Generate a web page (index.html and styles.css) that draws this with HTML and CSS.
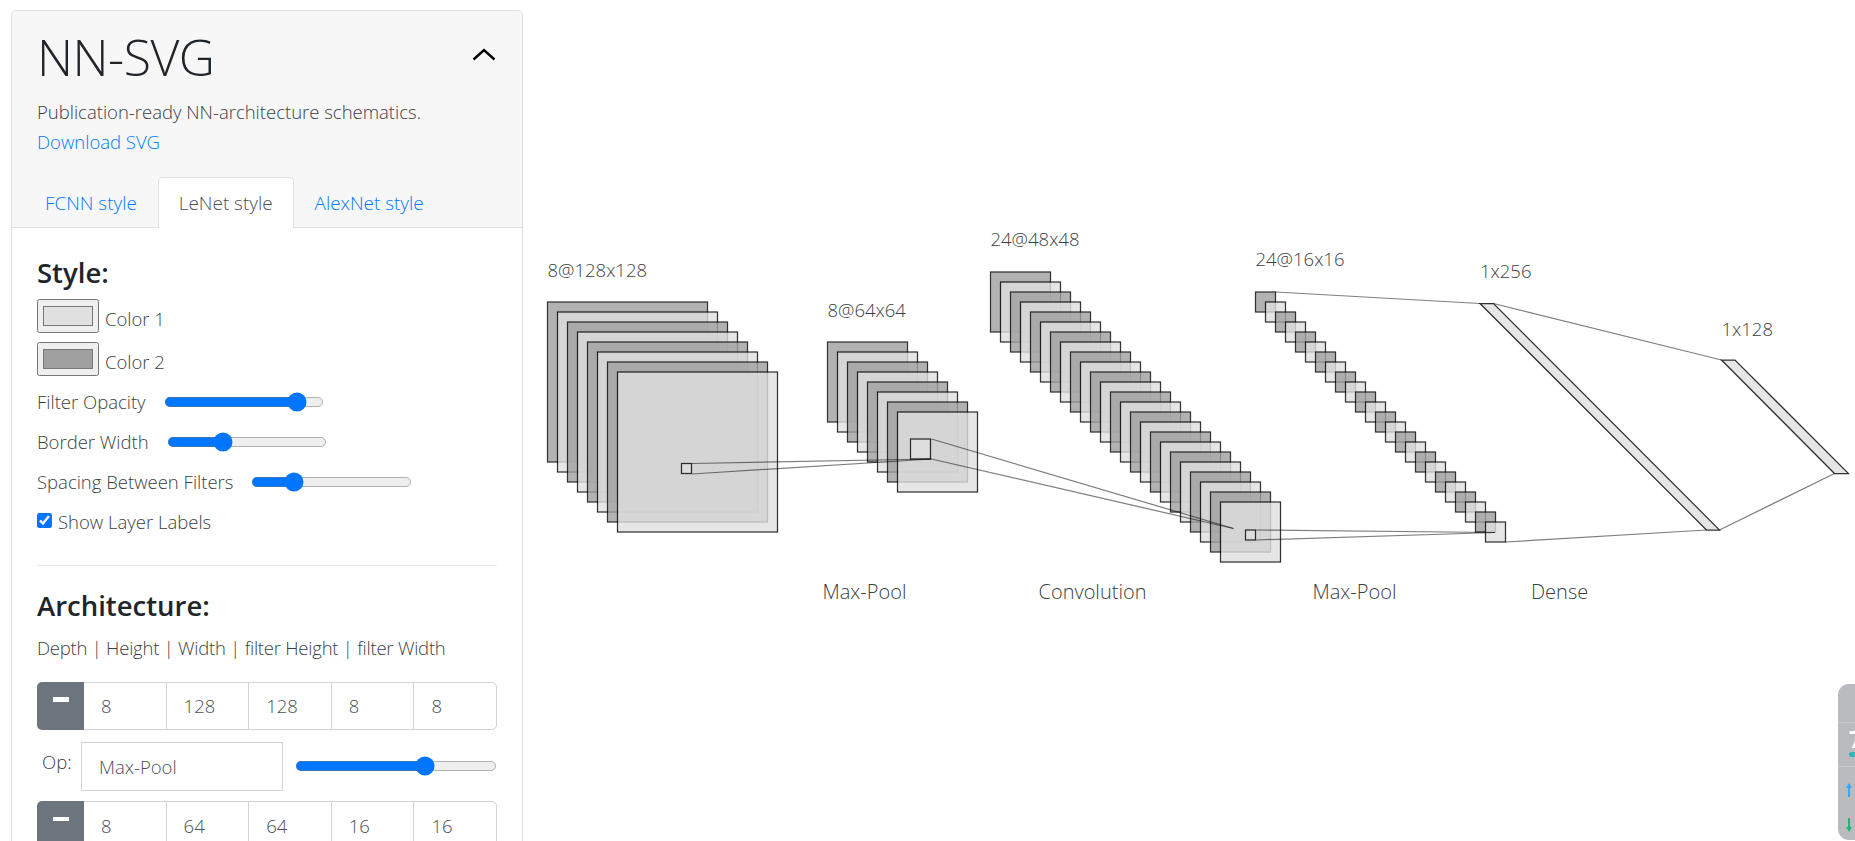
FILE: index.html
```html
<!DOCTYPE html>
<html lang="en">
<head>
    <meta charset="utf-8"/>
    <title>NN-SVG</title>
    <link rel="stylesheet" href="styles.css">
</head>
<body>
<div class="page">
    <div class="card">
        <div class="card-header">
            <div class="title-row">
                <h1>NN-SVG</h1>
                <svg class="chevron" width="24" height="14" viewBox="0 0 24 14">
                    <path d="M1.5 12.5 L12 3 L22.5 12.5" fill="none" stroke="#000" stroke-width="2.4"/>
                </svg>
            </div>
            <p class="lead">Publication-ready NN-architecture schematics.</p>
            <p class="lead"><a href="#">Download SVG</a></p>
            <ul class="tabs">
                <li><a href="#">FCNN style</a></li>
                <li class="active"><a href="#">LeNet style</a></li>
                <li><a href="#">AlexNet style</a></li>
            </ul>
        </div>
        <div class="card-body">
            <h5>Style:</h5>
            <div class="color-row">
                <input type="color" value="#e0e0e0">
                <label>Color 1</label>
            </div>
            <div class="color-row">
                <input type="color" value="#a0a0a0">
                <label>Color 2</label>
            </div>
            <div class="slider-row first">
                <label>Filter Opacity</label>
                <input type="range" class="slider-a" min="0" max="100" value="88">
            </div>
            <div class="slider-row">
                <label>Border Width</label>
                <input type="range" class="slider-b" min="0" max="100" value="33">
            </div>
            <div class="slider-row">
                <label>Spacing Between Filters</label>
                <input type="range" class="slider-c" min="0" max="100" value="23">
            </div>
            <div class="slider-row check">
                <input type="checkbox" checked>
                <label>Show Layer Labels</label>
            </div>
            <hr>
            <h5>Architecture:</h5>
            <p class="columns">Depth | Height | Width | filter Height | filter Width</p>

            <div class="layer-row">
                <button type="button"><span class="minus"></span></button>
                <input type="text" value="8">
                <input type="text" value="128">
                <input type="text" value="128">
                <input type="text" value="8">
                <input type="text" value="8">
            </div>
            <div class="op-row">
                <label>Op:</label>
                <input type="text" class="op-name" value="Max-Pool">
                <input type="range" class="op-slider" min="0" max="100" value="66">
            </div>
            <div class="layer-row">
                <button type="button"><span class="minus"></span></button>
                <input type="text" value="8">
                <input type="text" value="64">
                <input type="text" value="64">
                <input type="text" value="16">
                <input type="text" value="16">
            </div>
        </div>
    </div>

    <div class="graph">
        <svg id="net" viewBox="523 0 1332 841" width="1332" height="841">
            <g id="layers"></g>
            <g class="links">
                <line x1="692" y1="463.5" x2="931.5" y2="459"/>
                <line x1="692" y1="474" x2="931.5" y2="459"/>
                <line x1="931.5" y1="439" x2="1233.5" y2="528.5"/>
                <line x1="931.5" y1="459" x2="1233.5" y2="528.5"/>
                <line x1="1256" y1="530" x2="1495" y2="532.5"/>
                <line x1="1256" y1="540" x2="1495" y2="532.5"/>
                <line x1="1275.5" y1="292" x2="1480" y2="303.5"/>
                <line x1="1505.5" y1="542" x2="1706.5" y2="530"/>
                <line x1="1493.5" y1="303.5" x2="1721.5" y2="360"/>
                <line x1="1719.5" y1="530" x2="1834.5" y2="473.5"/>
            </g>
            <polygon class="dense" points="1480,303.5 1493.5,303.5 1719.5,530 1706.5,530"/>
            <polygon class="dense" points="1721.5,360 1735,360 1848.5,473.5 1834.5,473.5"/>
            <g class="labels">
                <text x="547.5" y="276.5">8@128x128</text>
                <text x="827.5" y="316.5">8@64x64</text>
                <text x="990.5" y="246">24@48x48</text>
                <text x="1255.5" y="266">24@16x16</text>
                <text x="1480" y="278">1x256</text>
                <text x="1721.5" y="335.5">1x128</text>
                <text class="op-label" x="822.5" y="598.5">Max-Pool</text>
                <text class="op-label" x="1038.5" y="598.5">Convolution</text>
                <text class="op-label" x="1312.5" y="598.5">Max-Pool</text>
                <text class="op-label" x="1531" y="598.5">Dense</text>
            </g>
        </svg>
    </div>
</div>

<div class="side-widget">
    <div class="widget-top"></div>
    <div class="widget-score">
        <span class="score">7</span>
        <span class="score-bar"></span>
    </div>
    <div class="widget-arrows">
        <svg width="6" height="14" viewBox="0 0 6 14"><path d="M3 0 L6 5 H4 V14 H2 V5 H0 Z" fill="#3aa6f5"/></svg>
        <svg width="6" height="14" viewBox="0 0 6 14"><path d="M3 14 L6 9 H4 V0 H2 V9 H0 Z" fill="#22b573"/></svg>
    </div>
</div>

<script src="graph.js"></script>
</body>
</html>
```

FILE: styles.css
```css
*{
    box-sizing: border-box;
}

html, body{
    height: 100%;
    margin: 0;
    overflow: hidden;
}

body{
    background: white;
    color: #3a3f44;
    font-family: "Open Sans", "Noto Sans", sans-serif;
    font-size: 18.5px;
    font-weight: 300;
}

a{
    color: #007bff;
    text-decoration: none;
}

.page{
    display: flex;
    align-items: flex-start;
    height: 100%;
}

/* sidebar */
.card{
    flex: none;
    width: 512px;
    margin: 10px 0 0 11px;
    border: 1px solid #dfdfdf;
    border-radius: 5px;
    background: white;
}

.card-header{
    background: #f7f7f7;
    border-bottom: 1px solid #dfdfdf;
    border-radius: 5px 5px 0 0;
    padding-top: 16px;
}

.title-row{
    display: flex;
    justify-content: space-between;
    align-items: center;
    padding: 0 26px 0 25px;
}

h1{
    margin: 0 0 10px 0;
    font-size: 50px;
    font-weight: 300;
    line-height: 60px;
    letter-spacing: -0.5px;
    color: #212529;
}

.chevron{
    margin-bottom: 16px;
}

.lead{
    margin: 0;
    padding-left: 25px;
    line-height: 30px;
}

.tabs{
    display: flex;
    list-style: none;
    margin: 20px 0 -1px 0;
    padding: 0 0 0 12px;
    font-size: 18.9px;
}

.tabs li{
    border: 1px solid transparent;
    border-bottom: 0;
    border-radius: 5px 5px 0 0;
    height: 51px;
    padding: 10px 20px;
    line-height: 30px;
}

.tabs li.active{
    background: white;
    border-color: #dee2e6;
}

.tabs li.active a{
    color: #495057;
}

.card-body{
    padding: 30px 25px 25px 25px;
    height: 700px;
}

h5{
    margin: 0;
    font-size: 27.5px;
    font-weight: 600;
    line-height: 30px;
    color: #212529;
}

label{
    line-height: 30px;
}

.color-row{
    display: flex;
    align-items: flex-start;
    gap: 6px;
    height: 43px;
}

.card-body h5 + .color-row{
    margin-top: 11px;
}

.color-row input{
    zoom: 1.25;
    width: 49.6px;
    height: 27px;
    margin: 0;
}

.color-row label{
    margin-top: 5px;
}

.slider-row{
    display: flex;
    align-items: center;
    gap: 18px;
    height: 40px;
}

.slider-row.first{
    margin-top: -3.5px;
}

.slider-row input[type=range], .op-slider{
    zoom: 1.25;
    width: 128.5px;
    margin: 0;
}

.slider-row .slider-a{
    margin-left: 2.5px;
}

.slider-row .slider-b{
    margin-left: -1.5px;
}

.slider-row.check{
    gap: 6px;
}

.slider-row.check input{
    zoom: 1.15;
    margin: -2px 0 0 0;
}

hr{
    height: 0;
    margin: 23px 0 0 0;
    border: 0;
    border-top: 1px solid rgba(0, 0, 0, 0.1);
}

hr + h5{
    margin-top: 25.5px;
}

.columns{
    margin: 12px 0 0 0;
    line-height: 30px;
    letter-spacing: -0.23px;
}

.layer-row{
    display: flex;
    height: 48px;
    margin-top: 10px;
}

.columns + .layer-row{
    margin-top: 18.5px;
}

.layer-row button{
    flex: none;
    width: 47px;
    padding: 0 0 12px 0;
    border: 0;
    border-radius: 5px 0 0 5px;
    background: #6c757d;
}

.minus{
    display: block;
    width: 16px;
    height: 4.5px;
    margin: 0 auto;
    background: white;
}

.layer-row input, .op-name{
    font-family: inherit;
    font-size: inherit;
    font-weight: 300;
    color: #495057;
    padding: 0 15px 0 17px;
    border: 1px solid #ced4da;
}

.layer-row input{
    flex: 1;
    min-width: 0;
    margin-left: -1px;
    border-radius: 0;
}

.layer-row input:first-of-type{
    margin-left: 0;
    border-left: 0;
}

.layer-row input:last-child{
    border-radius: 0 5px 5px 0;
}

.op-row{
    display: flex;
    align-items: center;
    height: 49.5px;
    margin-top: 12px;
}

.op-row label{
    align-self: flex-start;
    width: 44px;
    padding: 5px 0 0 5px;
}

.op-name{
    flex: none;
    width: 202px;
    height: 100%;
}

.op-slider{
    width: 161.5px;
    margin-left: 9.5px;
}

/* graph */
.graph{
    flex: 1;
    min-width: 0;
}

#net{
    display: block;
}

.links line{
    stroke: black;
    stroke-width: 1.25;
    stroke-opacity: 0.5;
}

.layer{
    stroke: black;
    stroke-width: 1.25;
    opacity: 0.8;
}

.layer.dark{
    fill: #a0a0a0;
}

.layer.light{
    fill: #e0e0e0;
}

.dense{
    fill: #e0e0e0;
    fill-opacity: 0.8;
    stroke: black;
    stroke-opacity: 0.8;
    stroke-width: 1.25;
}

.labels text{
    font-family: "Open Sans", "Noto Sans", sans-serif;
    font-size: 18.5px;
    font-weight: 300;
    fill: #3a3f44;
}

.labels text.op-label{
    font-size: 20px;
}

/* floating panel at the right edge */
.side-widget{
    position: absolute;
    left: 1838px;
    top: 684px;
    width: 40px;
    height: 156px;
    overflow: hidden;
    border-radius: 11px 0 0 11px;
    background: #b9bbbe;
}

.widget-top{
    height: 39px;
    border-bottom: 1px solid #c6c8ca;
}

.widget-score{
    height: 44px;
    padding: 3px 0 0 11px;
    border-bottom: 1px solid #c6c8ca;
    filter: blur(0.4px);
}

.score{
    display: block;
    color: white;
    font-size: 24px;
    font-weight: 700;
    line-height: 26px;
}

.score-bar{
    display: block;
    width: 20px;
    height: 5px;
    border-radius: 2px;
    background: linear-gradient(90deg, #3ab0c0, #3ac08e);
}

.widget-arrows{
    display: flex;
    flex-direction: column;
    gap: 21px;
    padding: 16px 0 0 8px;
    filter: blur(0.4px);
}
```

FILE: graph.js
```js
// x, y of the back filter, filter size, number of filters
var stacks = [
    [547.5, 302, 160, 8],
    [827.5, 342, 80, 8],
    [990.5, 272, 60, 24],
    [1255.5, 292, 20, 24]
];
// the small filter windows
var windows = [
    [681.5, 463.5, 10],
    [910.5, 439, 20],
    [1245.5, 530, 10]
];

var ns = "http://www.w3.org/2000/svg";
var group = document.getElementById("layers");

function addRect(x, y, size, cls) {
    var r = document.createElementNS(ns, "rect");
    r.setAttribute("x", x);
    r.setAttribute("y", y);
    r.setAttribute("width", size);
    r.setAttribute("height", size);
    r.setAttribute("class", "layer " + cls);
    group.appendChild(r);
}

for (var i = 0; i < stacks.length; i++) {
    var s = stacks[i];
    for (var j = 0; j < s[3]; j++) {
        addRect(s[0] + j * 10, s[1] + j * 10, s[2], j % 2 ? "light" : "dark");
    }
}
for (var k = 0; k < windows.length; k++) {
    addRect(windows[k][0], windows[k][1], windows[k][2], "light");
}
```
